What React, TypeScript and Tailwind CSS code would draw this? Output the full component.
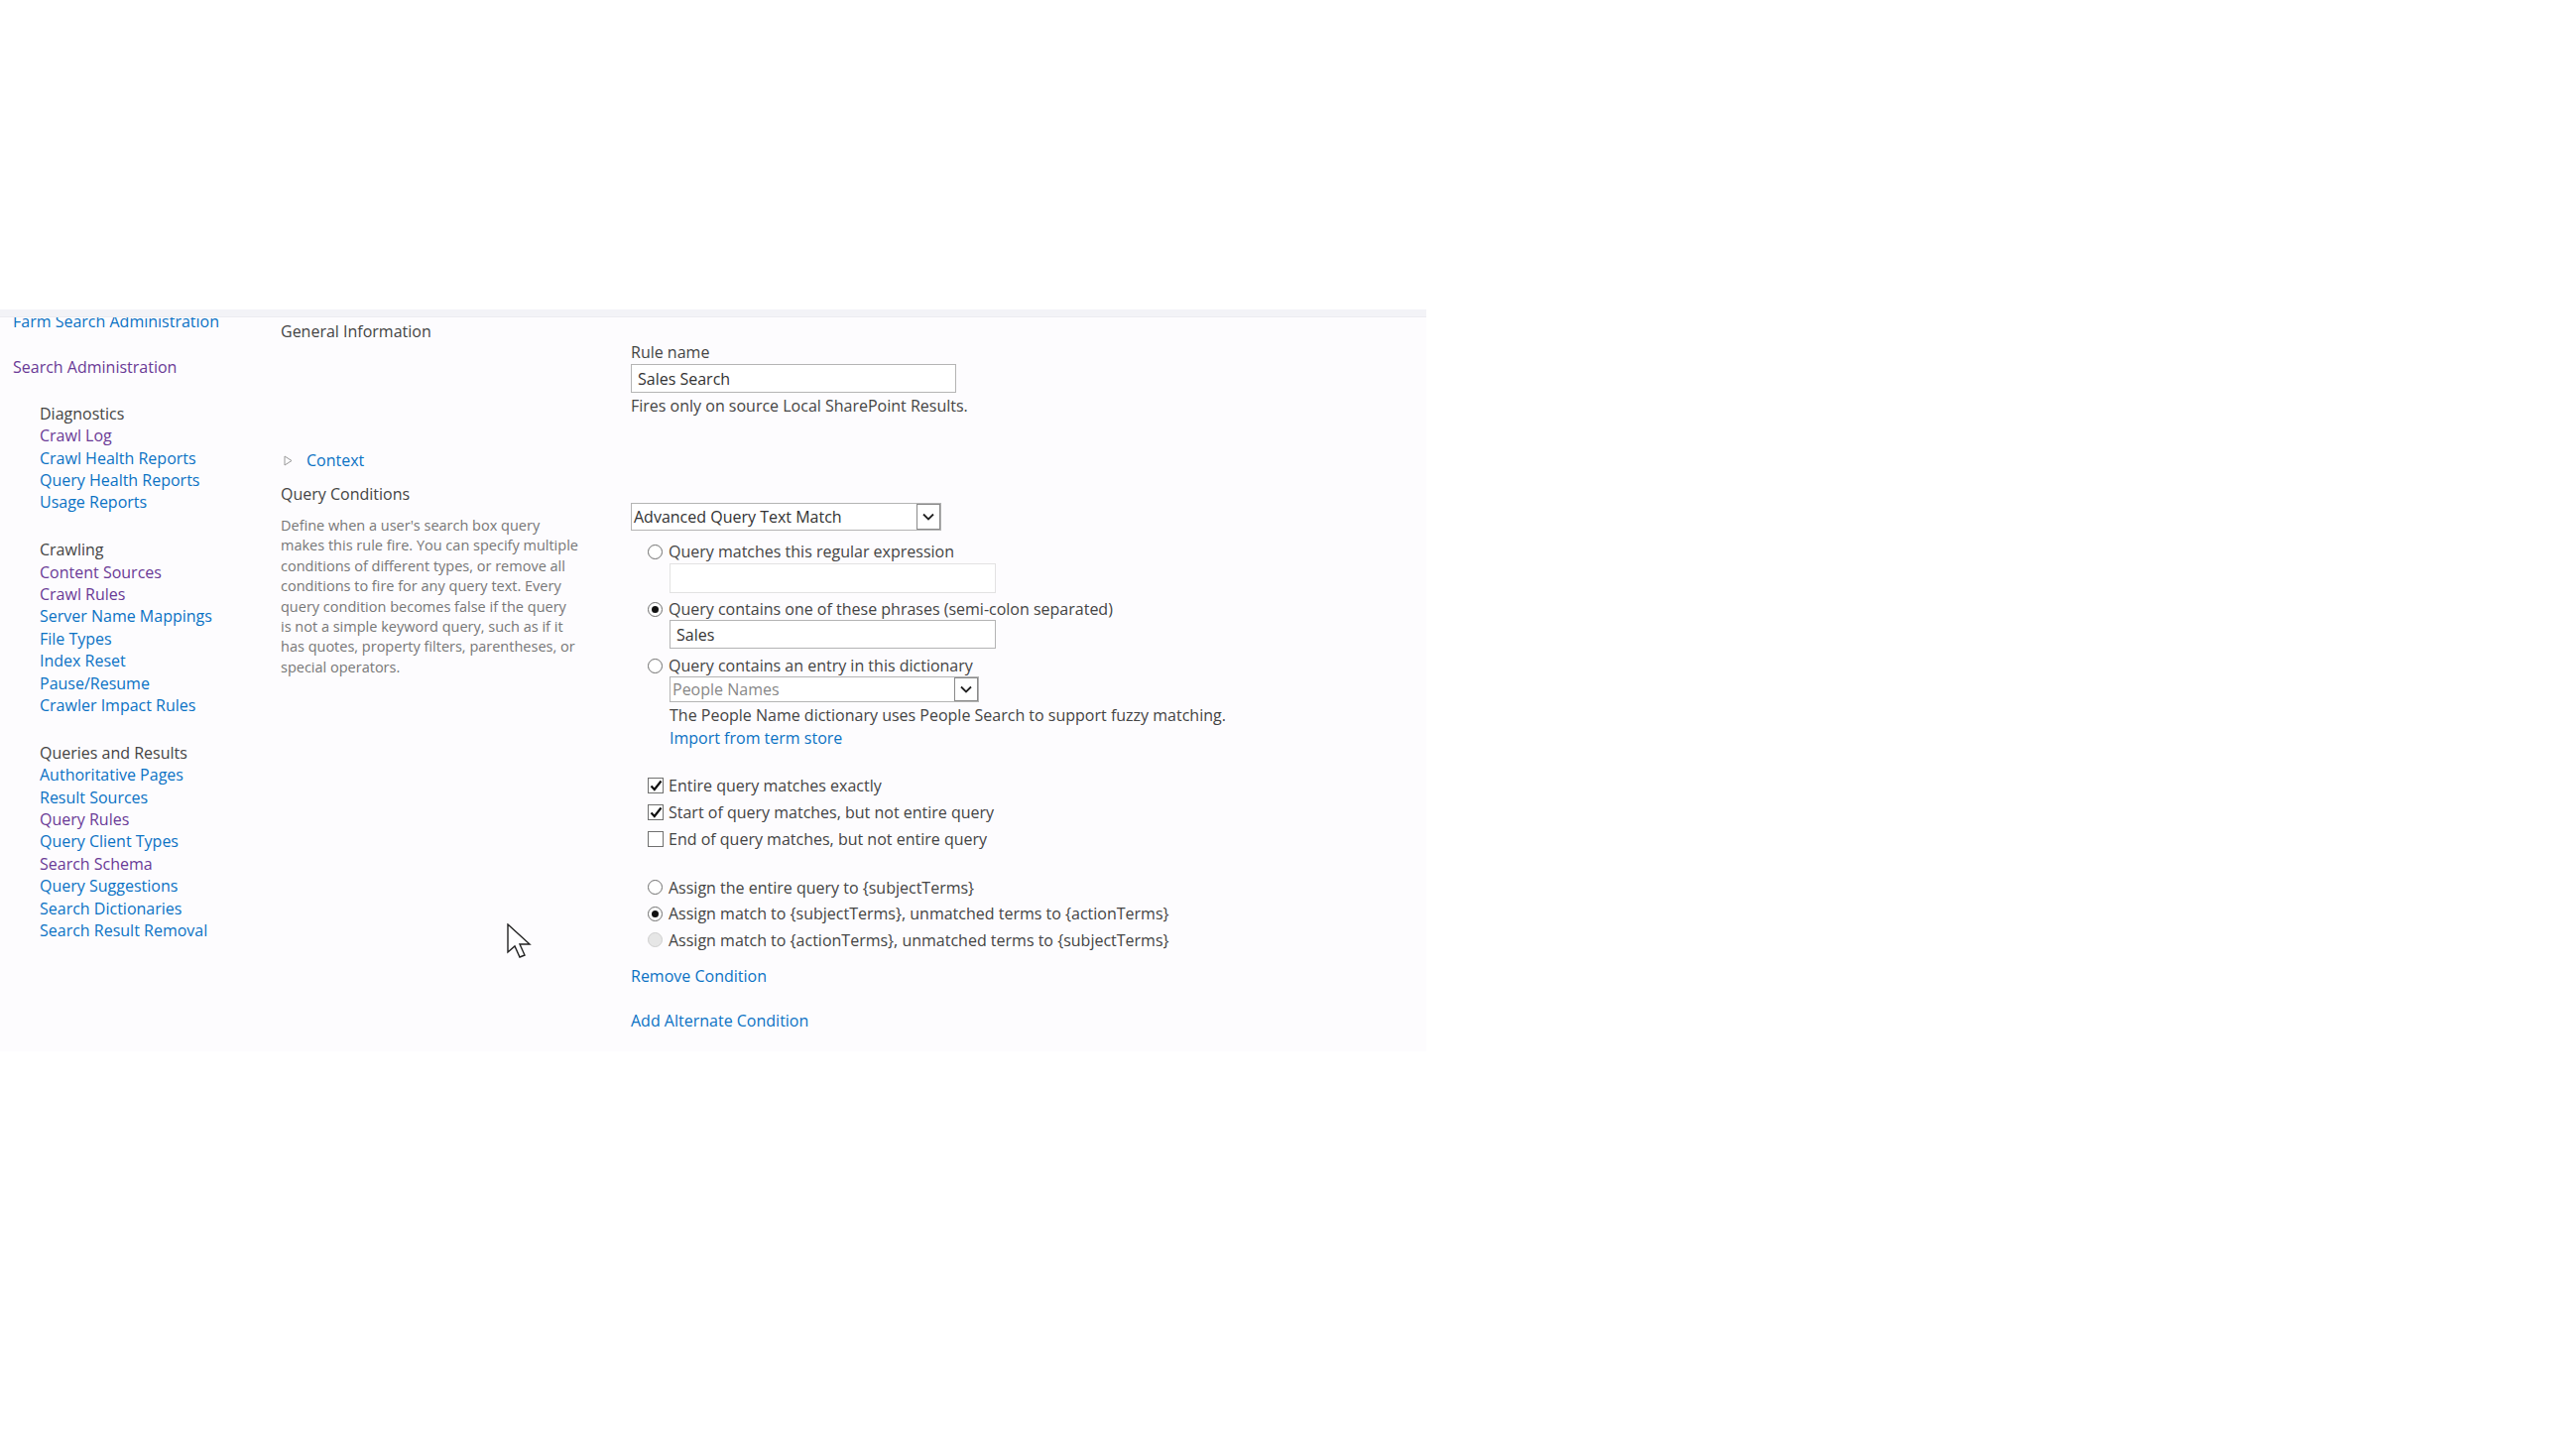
import React from "react";

const font = { fontFamily: '"Open Sans", "Noto Sans", sans-serif' };

const Radio = ({ checked = false, disabled = false }: { checked?: boolean; disabled?: boolean }) => (
  <span
    className={
      "flex items-center justify-center w-[15px] h-[15px] rounded-full border " +
      (disabled ? "border-[#cfcfcf] bg-[#e6e6e6]" : "border-[#6d6d6d] bg-white")
    }
  >
    {checked && <span className="w-[7px] h-[7px] rounded-full bg-[#111]" />}
  </span>
);

const Check = ({ checked = false }: { checked?: boolean }) => (
  <span className="flex items-center justify-center w-[16px] h-[16px] border border-[#707070] bg-white">
    {checked && (
      <svg width="13" height="12" viewBox="0 0 13 12">
        <path d="M1.5 6.5 L4.8 10 L11.5 1.5" fill="none" stroke="#111" strokeWidth="2.2" />
      </svg>
    )}
  </span>
);

const Chevron = () => (
  <svg width="12" height="8" viewBox="0 0 12 8">
    <path d="M1 1.5 L6 6.5 L11 1.5" fill="none" stroke="#222" strokeWidth="1.8" />
  </svg>
);

const Select = ({ label, w, h, muted = false }: { label: string; w: string; h: string; muted?: boolean }) => (
  <div className={`flex ${w} ${h} border border-[#b4b4b4] bg-white`}>
    <div className={"flex-1 flex items-center pl-[2px] " + (muted ? "text-[#888]" : "text-[#333]")}>{label}</div>
    <div className="w-[24px] flex items-center justify-center border border-[#8a8a8a] bg-white">
      <Chevron />
    </div>
  </div>
);

const Link = ({ text, visited = false }: { text: string; visited?: boolean }) => (
  <div className={visited ? "text-[#6a3a96]" : "text-[#0b72c4]"}>{text}</div>
);

const groups: { title: string; items: [string, boolean][] }[] = [
  {
    title: "Diagnostics",
    items: [
      ["Crawl Log", true],
      ["Crawl Health Reports", false],
      ["Query Health Reports", false],
      ["Usage Reports", false],
    ],
  },
  {
    title: "Crawling",
    items: [
      ["Content Sources", true],
      ["Crawl Rules", true],
      ["Server Name Mappings", false],
      ["File Types", false],
      ["Index Reset", false],
      ["Pause/Resume", false],
      ["Crawler Impact Rules", false],
    ],
  },
  {
    title: "Queries and Results",
    items: [
      ["Authoritative Pages", false],
      ["Result Sources", false],
      ["Query Rules", true],
      ["Query Client Types", false],
      ["Search Schema", true],
      ["Query Suggestions", false],
      ["Search Dictionaries", false],
      ["Search Result Removal", false],
    ],
  },
];

export default function App() {
  return (
    <div className="relative min-h-screen bg-white text-[16px]" style={font}>
      <div className="h-[312px]" />
      <div className="w-[1438px]">
        <div className="h-[8px] bg-[#f3f3f7] border-b border-[#ececf0]" />
        <div className="flex h-[740px] overflow-hidden bg-[#fdfcfe]">
          {/* left nav */}
          <div className="w-[283px] pl-[13px] leading-[22.4px]">
            <div className="-mt-[7px] text-[#0b72c4]">Farm Search Administration</div>
            <div className="mt-[24px] text-[#6a3a96]">Search Administration</div>
            {groups.map((g, i) => (
              <div key={g.title} className={"pl-[27px] " + (i === 0 ? "mt-[24px]" : "mt-[25.3px]")}>
                <div className="text-[#444]">{g.title}</div>
                {g.items.map(([t, v]) => (
                  <Link key={t} text={t} visited={v} />
                ))}
              </div>
            ))}
          </div>

          {/* section labels */}
          <div className="w-[353px] leading-[22px]">
            <div className="mt-[3px] text-[#444]">General Information</div>
            <div className="mt-[108px] flex items-center">
              <svg width="9" height="11" viewBox="0 0 9 11" className="ml-[3px]">
                <path d="M1 1 L8 5.5 L1 10 Z" fill="none" stroke="#999" strokeWidth="1" />
              </svg>
              <span className="ml-[14px] text-[#0b72c4]">Context</span>
            </div>
            <div className="mt-[12px] text-[#444]">Query Conditions</div>
            <div className="mt-[11px] text-[14.5px] leading-[20.4px] text-[#777] whitespace-nowrap">
              Define when a user's search box query
              <br />
              makes this rule fire. You can specify multiple
              <br />
              conditions of different types, or remove all
              <br />
              conditions to fire for any query text. Every
              <br />
              query condition becomes false if the query
              <br />
              is not a simple keyword query, such as if it
              <br />
              has quotes, property filters, parentheses, or
              <br />
              special operators.
            </div>
          </div>

          {/* form */}
          <div className="flex-1 leading-[22px] text-[#444]">
            <div className="mt-[24px]">Rule name</div>
            <div className="mt-[1px] w-[328px] h-[29px] border border-[#b4b4b4] bg-white flex items-center pl-[6px] text-[#333]">
              Sales Search
            </div>
            <div className="mt-[2px]">Fires only on source Local SharePoint Results.</div>

            <div className="mt-[87px]">
              <Select label="Advanced Query Text Match" w="w-[313px]" h="h-[28px]" />
            </div>

            <div className="pl-[17px]">
              <div className="mt-[10px] flex items-center gap-[6px]">
                <Radio />
                <span>Query matches this regular expression</span>
              </div>
              <div className="mt-[1px] ml-[22px] w-[329px] h-[30px] border border-[#e2e2e2] bg-white" />
              <div className="mt-[5px] flex items-center gap-[6px]">
                <Radio checked />
                <span>Query contains one of these phrases (semi-colon separated)</span>
              </div>
              <div className="ml-[22px] w-[329px] h-[29px] border border-[#b4b4b4] bg-white flex items-center pl-[6px] text-[#333]">
                Sales
              </div>
              <div className="mt-[6px] flex items-center gap-[6px]">
                <Radio />
                <span>Query contains an entry in this dictionary</span>
              </div>
              <div className="ml-[22px]">
                <Select label="People Names" w="w-[312px]" h="h-[26px]" muted />
                <div className="mt-[2px]">The People Name dictionary uses People Search to support fuzzy matching.</div>
                <div className="mt-[1px] text-[#0b72c4]">Import from term store</div>
              </div>

              <div className="mt-[23.5px]">
                {[
                  ["Entire query matches exactly", true],
                  ["Start of query matches, but not entire query", true],
                  ["End of query matches, but not entire query", false],
                ].map(([t, c]) => (
                  <div key={t as string} className="h-[27px] flex items-center gap-[5px]">
                    <Check checked={c as boolean} />
                    <span>{t}</span>
                  </div>
                ))}
              </div>

              <div className="mt-[22px]">
                <div className="h-[26.5px] flex items-center gap-[6px]">
                  <Radio />
                  <span>Assign the entire query to {"{subjectTerms}"}</span>
                </div>
                <div className="h-[26.5px] flex items-center gap-[6px]">
                  <Radio checked />
                  <span>Assign match to {"{subjectTerms}"}, unmatched terms to {"{actionTerms}"}</span>
                </div>
                <div className="h-[26.5px] flex items-center gap-[6px]">
                  <Radio disabled />
                  <span>Assign match to {"{actionTerms}"}, unmatched terms to {"{subjectTerms}"}</span>
                </div>
              </div>
            </div>

            <div className="mt-[12px] text-[#0b72c4]">Remove Condition</div>
            <div className="mt-[23px] text-[#0b72c4]">Add Alternate Condition</div>
          </div>
        </div>
      </div>

      {/* mouse pointer */}
      <svg className="absolute left-[511px] top-[931px]" width="26" height="38" viewBox="0 0 26 38">
        <path
          d="M1 1 L1 29 L8 23 L13 34 L18 32 L13 21 L23 21 Z"
          fill="#fff"
          stroke="#222"
          strokeWidth="1.4"
          strokeLinejoin="miter"
        />
      </svg>
    </div>
  );
}
